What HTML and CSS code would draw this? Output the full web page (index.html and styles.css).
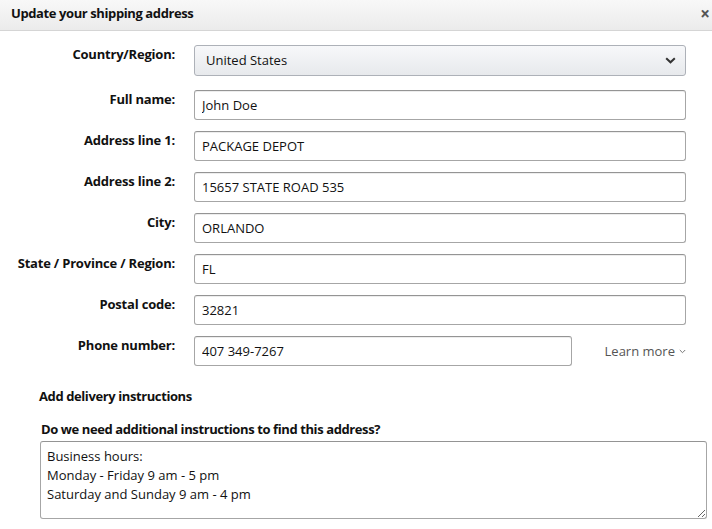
FILE: index.html
```html
<!DOCTYPE html>
<html lang="en">
  <head>
    <meta charset="UTF-8" />
    <meta name="viewport" content="width=device-width, initial-scale=1.0" />
    <title>Update your shipping address</title>
    <link rel="stylesheet" href="styles.css">
  </head>
  <body>
    <div class="modal">
      <div class="modal-header">
        <h1>Update your shipping address</h1>
        <button class="close-btn" type="button">&times;</button>
      </div>
      <form class="address-form">
        <div class="form-row first">
          <label for="country">Country/Region:</label>
          <div class="select-box" id="country">
            <span>United States</span>
            <svg width="11" height="7" viewBox="0 0 11 7"><path d="M1.2 1.2 L5.5 5.3 L9.8 1.2" fill="none" stroke="#333" stroke-width="2"/></svg>
          </div>
        </div>
        <div class="form-row">
          <label for="fullName">Full name:</label>
          <input type="text" id="fullName" value="John Doe" />
        </div>
        <div class="form-row">
          <label for="line1">Address line 1:</label>
          <input type="text" id="line1" value="PACKAGE DEPOT" />
        </div>
        <div class="form-row">
          <label for="line2">Address line 2:</label>
          <input type="text" id="line2" value="15657 STATE ROAD 535" />
        </div>
        <div class="form-row">
          <label for="city">City:</label>
          <input type="text" id="city" value="ORLANDO" />
        </div>
        <div class="form-row">
          <label for="state">State / Province / Region:</label>
          <input type="text" id="state" value="FL" />
        </div>
        <div class="form-row">
          <label for="postal">Postal code:</label>
          <input type="text" id="postal" value="32821" />
        </div>
        <div class="form-row">
          <label for="phone">Phone number:</label>
          <div class="phone-group">
            <input type="text" id="phone" value="407 349-7267" />
            <a class="learn-more" href="#">Learn more
              <svg width="7" height="5" viewBox="0 0 7 5"><path d="M0.8 1 L3.5 3.7 L6.2 1" fill="none" stroke="#777" stroke-width="1"/></svg>
            </a>
          </div>
        </div>
        <div class="delivery">
          <h2>Add delivery instructions</h2>
          <label for="instructions">Do we need additional instructions to find this address?</label>
          <textarea id="instructions">Business hours:
Monday - Friday 9 am - 5 pm
Saturday and Sunday 9 am - 4 pm</textarea>
        </div>
      </form>
    </div>
  </body>
</html>
```

FILE: styles.css
```css
* {
  margin: 0;
  padding: 0;
  box-sizing: border-box;
  font-family: "Open Sans", "Noto Sans", Arial, sans-serif;
}
body {
  background: white;
  color: #111;
  font-size: 13px;
}
.modal {
  width: 712px;
  height: 529px;
  overflow: hidden;
}
.modal-header {
  height: 31px;
  background: linear-gradient(#f8f8f8, #ebebeb);
  border-bottom: 1px solid #d5d5d5;
  display: flex;
  align-items: center;
  justify-content: space-between;
  padding: 0 2px 4px 11px;
}
.modal-header h1 {
  font-size: 13px;
  font-weight: 700;
  letter-spacing: -0.4px;
  color: #111;
}
.close-btn {
  border: none;
  background: none;
  font-size: 17px;
  font-weight: 700;
  color: #555;
  line-height: 1;
}
.address-form {
  padding-top: 14px;
}
.form-row {
  display: grid;
  grid-template-columns: 175px 492px;
  column-gap: 19px;
  margin-bottom: 11px;
}
.form-row.first {
  margin-bottom: 14px;
}
.form-row label {
  text-align: right;
  font-weight: 700;
  letter-spacing: -0.2px;
  line-height: 17px;
  padding-top: 1px;
}
.form-row input {
  height: 30px;
  width: 100%;
  border: 1px solid #a6a6a6;
  border-top-color: #949494;
  border-radius: 3px;
  padding: 0 7px;
  font-size: 13px;
  color: #111;
  box-shadow: 0 1px 0 rgba(255, 255, 255, 0.5), 0 1px 0 rgba(0, 0, 0, 0.07) inset;
  outline: none;
}
.select-box {
  height: 31px;
  border: 1px solid #adb1b8;
  border-radius: 3px;
  background: linear-gradient(#f7f8fa, #e7e9ec);
  display: flex;
  align-items: center;
  justify-content: space-between;
  padding: 0 9px 1px 11px;
}
.phone-group {
  display: flex;
  align-items: center;
  justify-content: space-between;
}
.phone-group input {
  width: 378px;
}
.learn-more {
  color: #555;
  text-decoration: none;
  display: flex;
  align-items: center;
  gap: 4px;
}
.delivery {
  padding: 10px 6px 0 39px;
}
.delivery h2 {
  font-size: 13px;
  font-weight: 700;
  letter-spacing: -0.4px;
  line-height: 18px;
  margin-bottom: 15px;
}
.delivery label {
  display: block;
  font-weight: 700;
  letter-spacing: -0.4px;
  line-height: 18px;
  padding-left: 2px;
  margin-bottom: 3px;
}
.delivery textarea {
  width: 667px;
  height: 78px;
  margin-left: 1px;
  border: 1px solid #a6a6a6;
  border-top-color: #949494;
  border-radius: 3px;
  padding: 5px 6px;
  font-size: 13px;
  line-height: 19px;
  color: #111;
  resize: vertical;
  outline: none;
}
```
